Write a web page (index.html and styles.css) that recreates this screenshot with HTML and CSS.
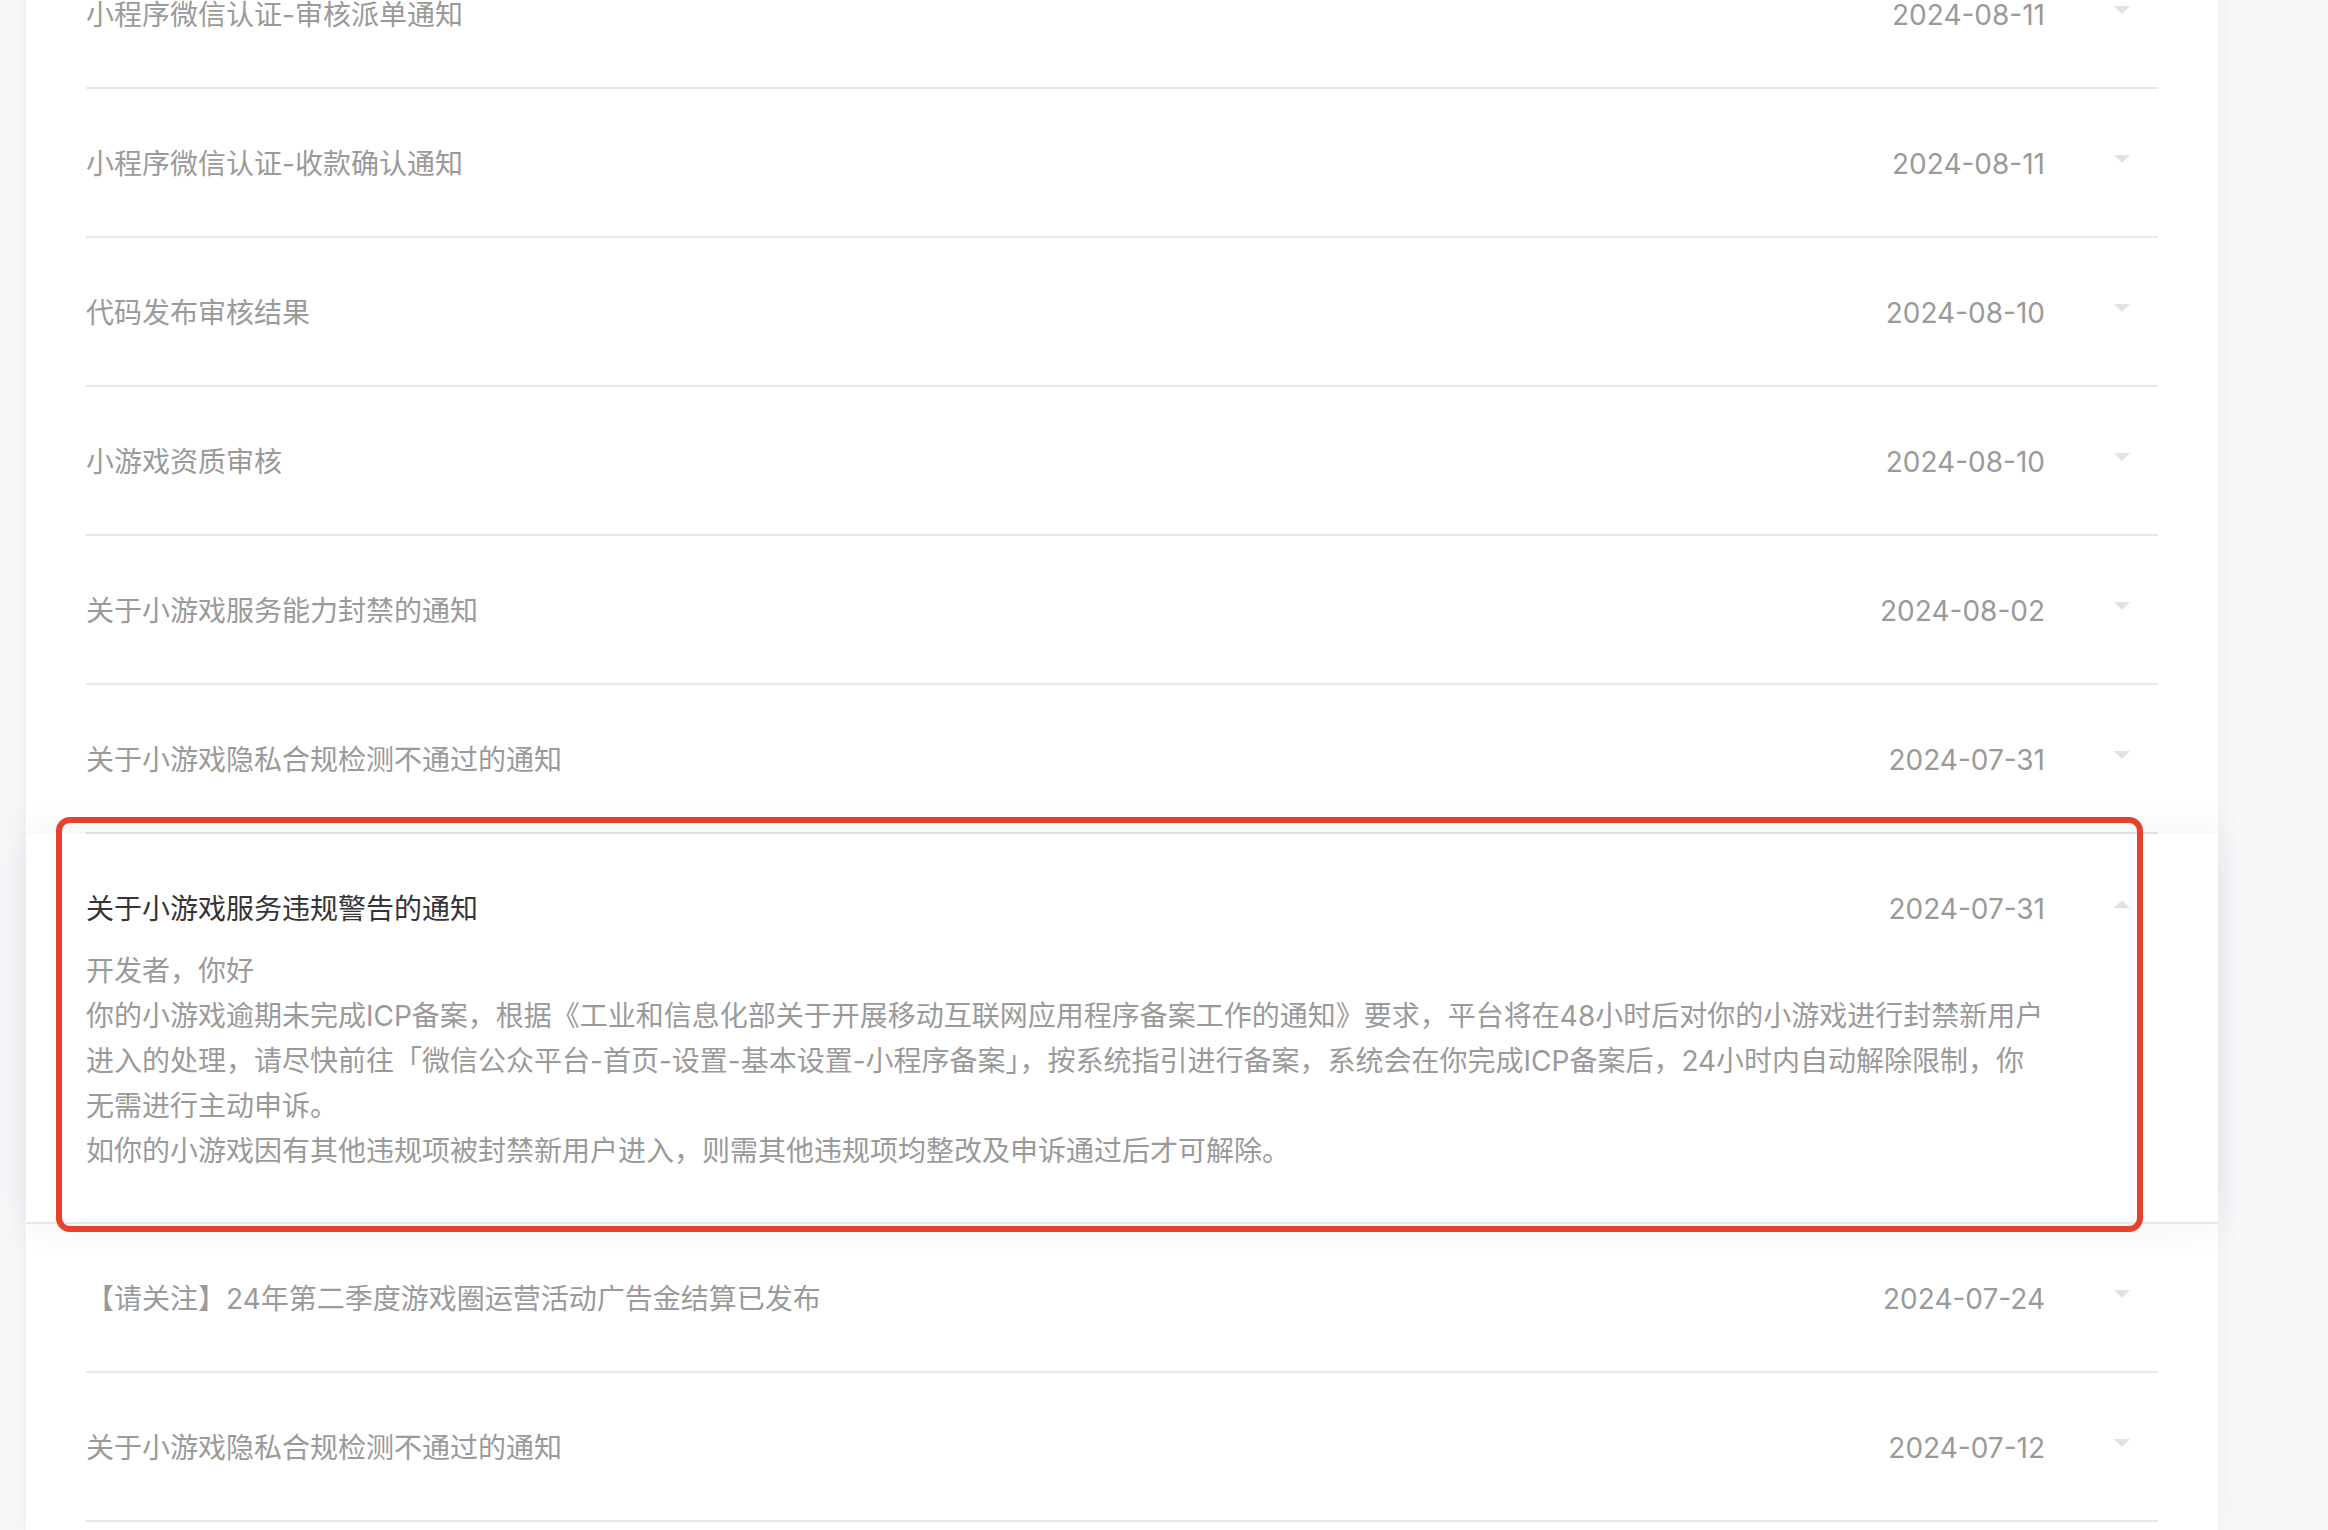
FILE: index.html
```html
<!DOCTYPE html>
<html lang="zh-CN">
<head>
<meta charset="utf-8">
<title>通知中心</title>
<link rel="stylesheet" href="styles.css">
</head>
<body>
<div class="page">
  <div class="card">
    <ul class="notice-list">
      <li class="notice">
        <div class="notice-head"><span class="notice-title">小程序微信认证-审核派单通知</span><span class="notice-date">2024-08-11</span><span class="notice-arrow"></span></div>
      </li>
      <li class="notice">
        <div class="notice-head"><span class="notice-title">小程序微信认证-收款确认通知</span><span class="notice-date">2024-08-11</span><span class="notice-arrow"></span></div>
      </li>
      <li class="notice">
        <div class="notice-head"><span class="notice-title">代码发布审核结果</span><span class="notice-date">2024-08-10</span><span class="notice-arrow"></span></div>
      </li>
      <li class="notice">
        <div class="notice-head"><span class="notice-title">小游戏资质审核</span><span class="notice-date">2024-08-10</span><span class="notice-arrow"></span></div>
      </li>
      <li class="notice">
        <div class="notice-head"><span class="notice-title">关于小游戏服务能力封禁的通知</span><span class="notice-date">2024-08-02</span><span class="notice-arrow"></span></div>
      </li>
      <li class="notice">
        <div class="notice-head"><span class="notice-title">关于小游戏隐私合规检测不通过的通知</span><span class="notice-date">2024-07-31</span><span class="notice-arrow"></span></div>
      </li>
      <li class="notice is-open">
        <div class="notice-head"><span class="notice-title">关于小游戏服务违规警告的通知</span><span class="notice-date">2024-07-31</span><span class="notice-arrow"></span></div>
        <div class="notice-body">
          <p>开发者，你好</p>
          <p>你的小游戏逾期未完成ICP备案，根据《工业和信息化部关于开展移动互联网应用程序备案工作的通知》要求，平台将在48小时后对你的小游戏进行封禁新用户进入的处理，请尽快前往「微信公众平台-首页-设置-基本设置-小程序备案」，按系统指引进行备案，系统会在你完成ICP备案后，24小时内自动解除限制，你无需进行主动申诉。</p>
          <p>如你的小游戏因有其他违规项被封禁新用户进入，则需其他违规项均整改及申诉通过后才可解除。</p>
        </div>
        <div class="highlight"></div>
      </li>
      <li class="notice">
        <div class="notice-head"><span class="notice-title">【请关注】24年第二季度游戏圈运营活动广告金结算已发布</span><span class="notice-date">2024-07-24</span><span class="notice-arrow"></span></div>
      </li>
      <li class="notice">
        <div class="notice-head"><span class="notice-title">关于小游戏隐私合规检测不通过的通知</span><span class="notice-date">2024-07-12</span><span class="notice-arrow"></span></div>
      </li>
    </ul>
  </div>
</div>
</body>
</html>
```

FILE: styles.css
```css
html, body {
  margin: 0;
  padding: 0;
}

body {
  background: #f7f8fa;
  font-family: "Inter", "Noto Sans CJK SC", "Noto Sans", sans-serif;
  font-size: 28px;
  color: #9a9a9a;
  height: 1530px;
  overflow: hidden;
}

.page {
  display: flex;
  padding-left: 26px;
}

.card {
  width: 2192px;
  box-sizing: border-box;
  margin-top: -60px;
  padding: 0 60px;
  background: #fff;
  box-shadow: 0 0 24px rgba(30, 40, 60, 0.05);
  min-height: 1590px;
}

.notice-list {
  list-style: none;
  margin: 0;
  padding: 0;
}

.notice {
  border-bottom: 2px solid #e7e7eb;
}

.notice-head {
  display: flex;
  align-items: center;
  padding: 55px 0 52px;
  line-height: 40px;
}

.notice-title {
  flex: 1;
  color: #9a9a9a;
  white-space: nowrap;
}

.notice-date {
  color: #9a9a9a;
}

.notice-arrow {
  width: 0;
  height: 0;
  margin: 0 28px 10px 69px;
  border-left: 8px solid transparent;
  border-right: 8px solid transparent;
  border-top: 8px solid #e1e1e7;
}

.notice.is-open {
  position: relative;
  z-index: 1;
  margin: 0 -60px;
  padding: 0 60px 48px;
  background: #fff;
  box-shadow: 0 0 40px rgba(30, 40, 60, 0.07);
}

.is-open .notice-head {
  padding: 55px 0 0;
}

.is-open .notice-title {
  color: #353535;
}

.is-open .notice-arrow {
  border-top: 0;
  border-bottom: 8px solid #e1e1e7;
}

.notice-body {
  width: 1959px;
  margin-top: 20px;
  line-height: 45px;
  color: #9a9a9a;
}

.notice-body p {
  margin: 0;
}

.highlight {
  position: absolute;
  left: 30px;
  top: -17px;
  width: 2087px;
  height: 415px;
  box-sizing: border-box;
  border: 6px solid #e8412b;
  border-radius: 14px;
  pointer-events: none;
}
```
